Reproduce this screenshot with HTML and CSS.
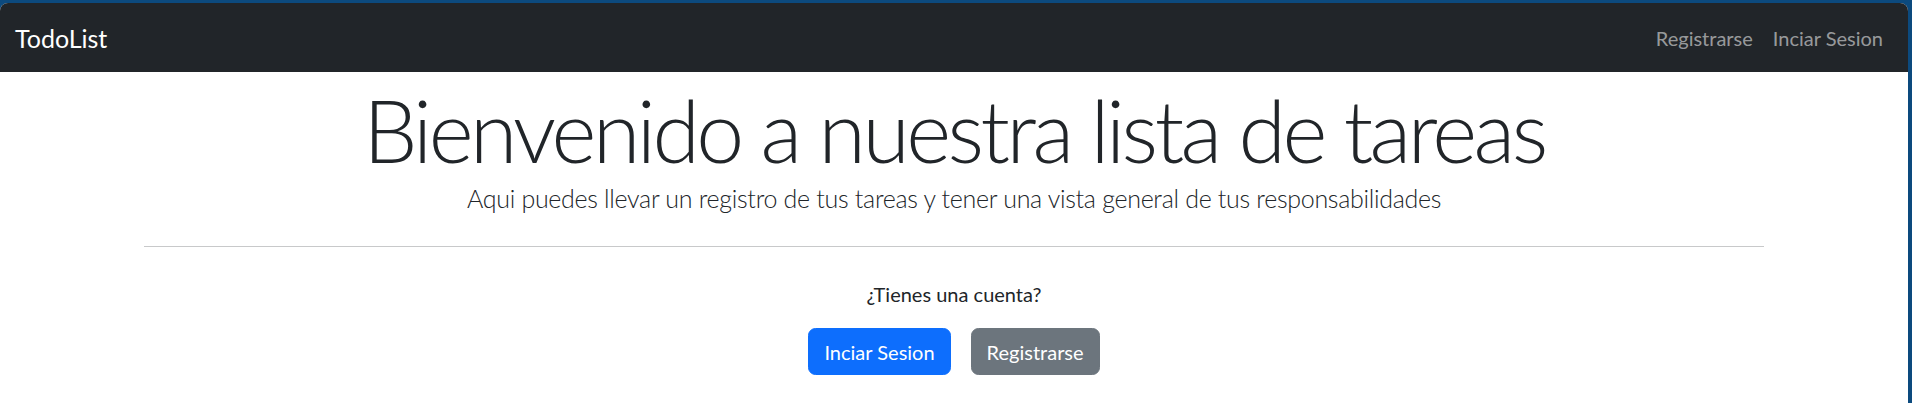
FILE: index.html
```html
<!DOCTYPE html>
<html lang="es">
<head>
<meta charset="utf-8">
<title>TodoList</title>
<link rel="stylesheet" href="styles.css">
</head>
<body>
<div class="window">
  <nav class="navbar">
    <a class="brand" href="#">TodoList</a>
    <ul class="nav">
      <li><a class="nav-link" href="#">Registrarse</a></li>
      <li><a class="nav-link" href="#">Inciar Sesion</a></li>
    </ul>
  </nav>
  <main class="container">
    <h1 class="display">Bienvenido a nuestra lista de tareas</h1>
    <p class="lead">Aqui puedes llevar un registro de tus tareas y tener una vista general de tus responsabilidades</p>
    <hr class="rule">
    <p class="question">¿Tienes una cuenta?</p>
    <div class="actions">
      <a class="btn btn-primary" href="#">Inciar Sesion</a>
      <a class="btn btn-secondary" href="#">Registrarse</a>
    </div>
  </main>
</div>
</body>
</html>
```

FILE: styles.css
```css
html, body {
  margin: 0;
  padding: 0;
}
body {
  background: #0c4a7e;
  font-family: Lato, "Open Sans", "Liberation Sans", sans-serif;
  color: #212529;
  height: 403px;
  overflow: hidden;
}
.window {
  margin: 3px 4px 0 0;
  height: 400px;
  background: #fff;
  border-radius: 8px 8px 0 0;
  overflow: hidden;
}
.navbar {
  height: 69px;
  background: #212529;
  display: flex;
  align-items: center;
  justify-content: space-between;
  padding: 0 15px;
  box-sizing: border-box;
}
.brand {
  color: #fff;
  text-decoration: none;
  font-size: 25px;
  line-height: 37px;
  margin-top: 1px;
}
.nav {
  list-style: none;
  margin: 0;
  padding: 0;
  display: flex;
}
.nav-link {
  display: block;
  padding: 10px;
  color: rgba(255, 255, 255, 0.55);
  text-decoration: none;
  font-size: 20px;
  line-height: 30px;
}
.container {
  width: 1620px;
  margin: 0 auto;
  text-align: center;
  display: flex;
  flex-direction: column;
  align-items: center;
}
.display {
  margin: 7px 0 0;
  font-size: 86px;
  font-weight: 300;
  line-height: 101px;
  letter-spacing: -3.5px;
  white-space: nowrap;
}
.lead {
  margin: 0;
  font-size: 25px;
  font-weight: 300;
  line-height: 37.5px;
  letter-spacing: -0.3px;
}
.rule {
  align-self: stretch;
  margin: 28.5px 0 0;
  border: 0;
  border-top: 1px solid #c8c9ca;
}
.question {
  margin: 32px 0 0;
  font-size: 20px;
  line-height: 30px;
}
.actions {
  margin-top: 19px;
  display: flex;
  gap: 20px;
}
.btn {
  display: block;
  padding: 7.5px 15px;
  border: 1px solid transparent;
  border-radius: 7.5px;
  font-size: 20px;
  line-height: 30px;
  color: #fff;
  text-decoration: none;
}
.btn-primary {
  background: #0d6efd;
  border-color: #0d6efd;
}
.btn-secondary {
  background: #6c757d;
  border-color: #6c757d;
}
```
